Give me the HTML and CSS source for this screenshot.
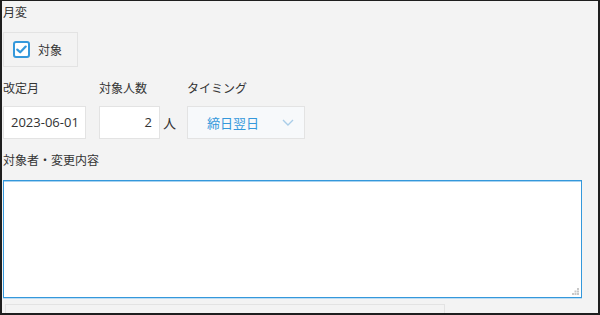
FILE: index.html
```html
<!DOCTYPE html>
<html lang="ja">

<head>
    <meta charset="UTF-8">
    <meta name="viewport" content="width=device-width, initial-scale=1.0">
    <title>月変</title>
    <link rel="stylesheet" href="styles.css">
</head>

<body>
    <div class="frame">
        <div class="field">
            <div class="label">月変</div>
            <div class="check-box">
                <span class="check">
                    <svg width="11" height="9" viewBox="0 0 11 9">
                        <path d="M1.3 4.6 L4.2 7.3 L9.7 1.6" fill="none" stroke="#3498db" stroke-width="2.2" stroke-linecap="round" stroke-linejoin="round" />
                    </svg>
                </span>
                <span class="check-text">対象</span>
            </div>
        </div>

        <div class="row">
            <div class="field">
                <div class="label">改定月</div>
                <div class="input date">2023-06-01</div>
            </div>
            <div class="field">
                <div class="label">対象人数</div>
                <div class="with-unit">
                    <div class="input number">2</div>
                    <span class="unit">人</span>
                </div>
            </div>
            <div class="field">
                <div class="label">タイミング</div>
                <div class="select">
                    <span class="select-text">締日翌日</span>
                    <svg width="12" height="7" viewBox="0 0 12 7">
                        <path d="M1 1 L6 6 L11 1" fill="none" stroke="#a9cde8" stroke-width="1.4" />
                    </svg>
                </div>
            </div>
        </div>

        <div class="field">
            <div class="label">対象者・変更内容</div>
            <div class="textarea">
                <svg class="grip" width="7" height="7" viewBox="0 0 7 7">
                    <rect x="5" y="0" width="2" height="2" fill="#c8c8c8" />
                    <rect x="2.5" y="2.5" width="2" height="2" fill="#c8c8c8" />
                    <rect x="5" y="2.5" width="2" height="2" fill="#c8c8c8" />
                    <rect x="0" y="5" width="2" height="2" fill="#c8c8c8" />
                    <rect x="2.5" y="5" width="2" height="2" fill="#c8c8c8" />
                    <rect x="5" y="5" width="2" height="2" fill="#c8c8c8" />
                </svg>
            </div>
        </div>

        <div class="next-box"></div>
    </div>
</body>

</html>
```

FILE: styles.css
```css
body {
    margin: 0;
    padding: 0;
    font-family: "Open Sans", "Noto Sans CJK JP", sans-serif;
    color: #333;
}

.frame {
    width: 600px;
    height: 315px;
    box-sizing: border-box;
    border: 2px solid #1e1e1e;
    border-top-width: 1px;
    background-color: #f3f3f3;
    padding: 3px 0 0 1px;
    overflow: hidden;
}

.label {
    font-size: 12px;
    line-height: 18px;
    height: 18px;
}

.check-box {
    width: 75px;
    height: 35px;
    box-sizing: border-box;
    margin-top: 10px;
    border: 1px solid #e3e3e3;
    display: flex;
    align-items: center;
    padding-left: 9px;
}

.check {
    width: 17px;
    height: 17px;
    box-sizing: border-box;
    border: 2px solid #3498db;
    border-radius: 3px;
    background-color: #fff;
    display: flex;
    align-items: center;
    justify-content: center;
}

.check-text {
    font-size: 12px;
    margin-left: 8px;
    white-space: nowrap;
}

.row {
    display: flex;
    gap: 13px;
    margin-top: 13px;
}

.row .label {
    margin-bottom: 8px;
}

.input {
    height: 33px;
    box-sizing: border-box;
    border: 1px solid #e3e3e3;
    background-color: #fff;
    font-size: 13px;
    line-height: 31px;
}

.date {
    width: 83px;
    padding-left: 7px;
}

.with-unit {
    display: flex;
    align-items: center;
}

.number {
    width: 61px;
    text-align: right;
    padding-right: 7px;
}

.unit {
    font-size: 13px;
    margin-left: 3px;
    margin-right: -2px;
}

.select {
    width: 118px;
    height: 33px;
    box-sizing: border-box;
    border: 1px solid #e3e3e3;
    background-color: #f7f9fb;
    display: flex;
    align-items: center;
    justify-content: space-between;
    padding: 0 10px 0 19px;
}

.select-text {
    font-size: 13px;
    color: #3498db;
}

.field + .row,
.row + .field {
    margin-top: 13px;
}

.row + .field .label {
    margin-top: 3px;
    margin-bottom: 10px;
}

.textarea {
    position: relative;
    width: 579px;
    height: 118px;
    box-sizing: border-box;
    border: 1px solid #3498db;
    background-color: #fff;
    box-shadow: inset 0 1px 0 #a8d2f0, 0 1px 0 #bcdcf3;
}

.grip {
    position: absolute;
    right: 2px;
    bottom: 2px;
}

.next-box {
    width: 438px;
    height: 20px;
    margin-top: 6px;
    margin-left: 2px;
    border: 1px solid #e3e3e3;
}
```
